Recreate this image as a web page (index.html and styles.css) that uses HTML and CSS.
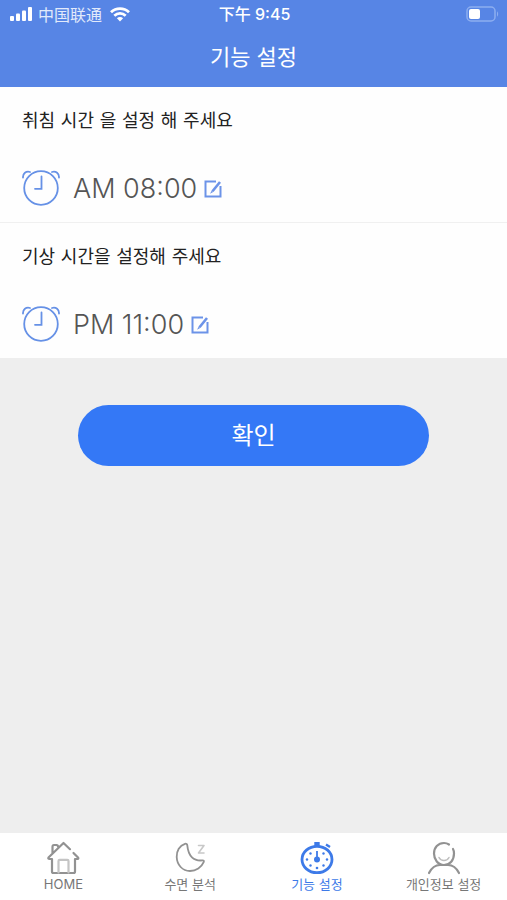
FILE: index.html
```html
<!DOCTYPE html>
<html lang="ko">
<head>
<meta charset="utf-8">
<meta name="viewport" content="width=device-width, initial-scale=1">
<title>기능 설정</title>
<link rel="stylesheet" href="styles.css">
</head>
<body>
<header class="header">
  <div class="status">
    <div class="status-left">
      <svg width="23" height="14" viewBox="0 0 23 14" fill="#fff" aria-hidden="true"><rect x="0" y="9" width="4" height="5" rx="1"/><rect x="6" y="6.500" width="4" height="7.500" rx="1"/><rect x="12" y="3.500" width="4" height="10.500" rx="1"/><rect x="18" y="0" width="4" height="14" rx="1"/></svg>
      <span class="carrier" lang="zh">中国联通</span>
      <svg class="wifi" width="20" height="15" viewBox="0 0 20 15" fill="none" stroke="#fff" stroke-width="2.800" aria-hidden="true"><path d="M1 5.300C6 .4 14 .4 19 5.300"/><path d="M4.300 8.700c3.300-3.100 8.100-3.100 11.400 0"/><path d="M6.900 11.200c1.800-1.500 4.400-1.500 6.200 0L10 14.600z" fill="#fff" stroke="none"/></svg>
    </div>
    <span class="clock" lang="zh">下午 9:45</span>
    <div class="status-right">
      <svg width="33" height="16" viewBox="0 0 33 16" aria-hidden="true"><rect x="1" y="1" width="28" height="14" rx="4" fill="none" stroke="#8daef0" stroke-width="1.500"/><rect x="3" y="3" width="11" height="10" rx="2" fill="#fff"/><path d="M31 5.500c1.500.5 1.500 4.500 0 5z" fill="#8daef0"/></svg>
    </div>
  </div>
  <h1 class="title">기능 설정</h1>
</header>
<main class="main">
  <section class="card">
    <h2 class="label">취침 시간 을 설정 해 주세요</h2>
    <div class="time-row">
      <svg class="alarm" width="38" height="38" viewBox="0 0 38 38" fill="none" stroke="#6691e6" stroke-width="1.800" stroke-linecap="round" aria-hidden="true"><circle cx="19" cy="18" r="16.800"/><path d="M19.500 6.500v12.300h-6.500M1 7.500C.8 3.500 4 .8 8 2M37 7.500c.2-4-3-6.700-7-5.500"/></svg>
      <span class="time">AM 08:00</span>
      <button class="edit" type="button" aria-label="취침 시간 수정">
        <svg width="18" height="18" viewBox="0 0 18 18" fill="none" stroke="#6c93e8" stroke-width="2" aria-hidden="true"><path d="M12 1.500H1.500v15h15V6"/><path d="M16 2l-7.500 9.200" stroke-width="2.600"/><path d="M7.800 10.500l-1.800 3.300 3.200-1.900z" fill="#6c93e8" stroke="none"/></svg>
      </button>
    </div>
  </section>
  <section class="card">
    <h2 class="label">기상 시간을 설정해 주세요</h2>
    <div class="time-row">
      <svg class="alarm" width="38" height="38" viewBox="0 0 38 38" fill="none" stroke="#6691e6" stroke-width="1.800" stroke-linecap="round" aria-hidden="true"><circle cx="19" cy="18" r="16.800"/><path d="M19.500 6.500v12.300h-6.500M1 7.500C.8 3.500 4 .8 8 2M37 7.500c.2-4-3-6.700-7-5.500"/></svg>
      <span class="time">PM 11:00</span>
      <button class="edit" type="button" aria-label="기상 시간 수정">
        <svg width="18" height="18" viewBox="0 0 18 18" fill="none" stroke="#6c93e8" stroke-width="2" aria-hidden="true"><path d="M12 1.500H1.500v15h15V6"/><path d="M16 2l-7.500 9.200" stroke-width="2.600"/><path d="M7.800 10.500l-1.800 3.300 3.200-1.900z" fill="#6c93e8" stroke="none"/></svg>
      </button>
    </div>
  </section>
  <div class="actions">
    <button class="confirm" type="button">확인</button>
  </div>
</main>
<nav class="tabs">
  <a class="tab" href="#home">
    <svg width="34" height="34" viewBox="0 0 34 34" fill="none" stroke="#929292" stroke-width="2.200" stroke-linecap="round" stroke-linejoin="round" aria-hidden="true"><path d="M24 8.200L17.500 2 2.500 16.500c-.6 1 0 1.500 1 1.500H6v12.500c0 1 .5 1.500 1.500 1.500h20c1 0 1.500-.5 1.500-1.500V18h2.500c1 0 1-.8.500-1.500L27.500 12M6.500 12V6c0-1.500.5-2 1.500-2h2.500c1 0 1.500.5 1.500 1.500"/><path d="M12.500 31.500V20c0-.7.500-1.200 1.200-1.200h7.600c.7 0 1.200.5 1.200 1.200v11.500" stroke="#c4c4c4"/></svg>
    <span>HOME</span>
  </a>
  <a class="tab" href="#sleep">
    <svg width="34" height="34" viewBox="0 0 34 34" fill="none" stroke="#929292" stroke-width="1.800" stroke-linecap="round" stroke-linejoin="round" aria-hidden="true"><path d="M12 2.800C6.500 4.500 3.500 10 3.700 16 4 24 9.500 30 17 30c6 0 11.500-3.600 13.800-9.100.4-1-.3-1.700-1.300-1.500-4.500.4-8-.5-10.500-3-3-3-4.200-6.500-4.700-12-.1-1.200-1.100-2-2.300-1.600z"/><path d="M25.500 4.500h5.500l-5.500 7.500H31" stroke="#c8c8c8" stroke-width="1.600"/></svg>
    <span>수면 분석</span>
  </a>
  <a class="tab tab-active" href="#settings" aria-current="page">
    <svg width="34" height="34" viewBox="0 0 34 34" fill="none" stroke="#3d7ae8" aria-hidden="true"><ellipse cx="17" cy="18.500" rx="15" ry="13.200" stroke-width="2.800"/><path d="M14.300 1h5.400v5h-5.400z" fill="#3d7ae8" stroke="none"/><path d="M26 3.500l4 2.500" stroke-width="2.400"/><path d="M17 10v8" stroke-width="1.800"/><circle cx="17" cy="18.500" r="3" fill="#3d7ae8" stroke="none"/><g fill="#3d7ae8" stroke="none"><circle cx="10.500" cy="12.500" r="1.200"/><circle cx="23.500" cy="12.500" r="1.200"/><circle cx="7" cy="18.500" r="1.200"/><circle cx="27" cy="18.500" r="1.200"/><circle cx="10.500" cy="24.500" r="1.200"/><circle cx="23.500" cy="24.500" r="1.200"/><circle cx="17" cy="27" r="1.300"/></g></svg>
    <span>기능 설정</span>
  </a>
  <a class="tab" href="#profile">
    <svg width="34" height="34" viewBox="0 0 34 34" fill="none" stroke="#929292" stroke-width="2.200" stroke-linecap="round" aria-hidden="true"><path d="M22 3.500C20.500 2.500 19 2 17 2 11 2 7 6.500 7 12.500S11 24 17 24s10-5 10-11.500c0-1.800-.2-3.200-1-4.500"/><path d="M2 32c2.500-5 6.500-8 11-8h8c4.500 0 8.500 3 11 8"/><path d="M12 16.500c2 4 8 4 10 0" stroke="#bdbdbd" stroke-width="1.500"/></svg>
    <span>개인정보 설정</span>
  </a>
</nav>
</body>
</html>
```
FILE: styles.css
```css
* {
  box-sizing: border-box;
}

body {
  margin: 0;
  min-height: 100vh;
  display: flex;
  flex-direction: column;
  background: #eeeeee;
  font-family: "DejaVu Sans", "Noto Sans CJK KR", sans-serif;
}

.header {
  background: #5785e5;
  color: #fff;
  padding-bottom: 16px;
}

.status {
  display: grid;
  grid-template-columns: 1fr auto 1fr;
  align-items: center;
  height: 28px;
  padding: 0 8px 0 10px;
}

.status-left {
  display: flex;
  align-items: center;
  gap: 5px;
}

.wifi {
  margin-left: 3px;
}

.status-right {
  display: flex;
  justify-content: flex-end;
}

.carrier {
  font: 400 16px/24px "Noto Sans CJK SC", sans-serif;
  color: #e2eafb;
}

.clock {
  font: 500 16px/24px Inter, "Noto Sans CJK SC", sans-serif;
}

.title {
  margin: 11px 0 0;
  text-align: center;
  font: 400 22px/32px "Noto Sans CJK KR", sans-serif;
}

.main {
  flex: 1;
}

.card {
  background: #fefefe;
  padding: 20px 22px 14px;
}

.card + .card {
  border-top: 1px solid #f0f0f0;
}

.label {
  margin: 0;
  font-size: 18px;
  line-height: 28px;
  font-weight: 400;
  color: #222;
}

.time-row {
  display: flex;
  align-items: center;
  margin-top: 35px;
  height: 38px;
}

.time {
  margin-left: 13px;
  font: 300 27px/38px Inter, sans-serif;
  color: #555;
}

.edit {
  display: flex;
  margin-left: 7px;
  padding: 0;
  border: 0;
  background: none;
  cursor: pointer;
}

.actions {
  padding: 47px 78px;
}

.confirm {
  display: block;
  width: 100%;
  padding: 13px 0 16px;
  border: 0;
  border-radius: 32px;
  background: #3478f6;
  color: #fff;
  font: 400 24px/32px "Noto Sans CJK KR", sans-serif;
  cursor: pointer;
}

.tabs {
  display: grid;
  grid-template-columns: repeat(4, 1fr);
  background: #fff;
  padding: 8px 0 7px;
}

.tab {
  display: flex;
  flex-direction: column;
  align-items: center;
  color: #777;
  font: 400 13px/18px Inter, "Noto Sans CJK KR", sans-serif;
  text-decoration: none;
}

.tab-active {
  color: #3d7ae8;
}
```
